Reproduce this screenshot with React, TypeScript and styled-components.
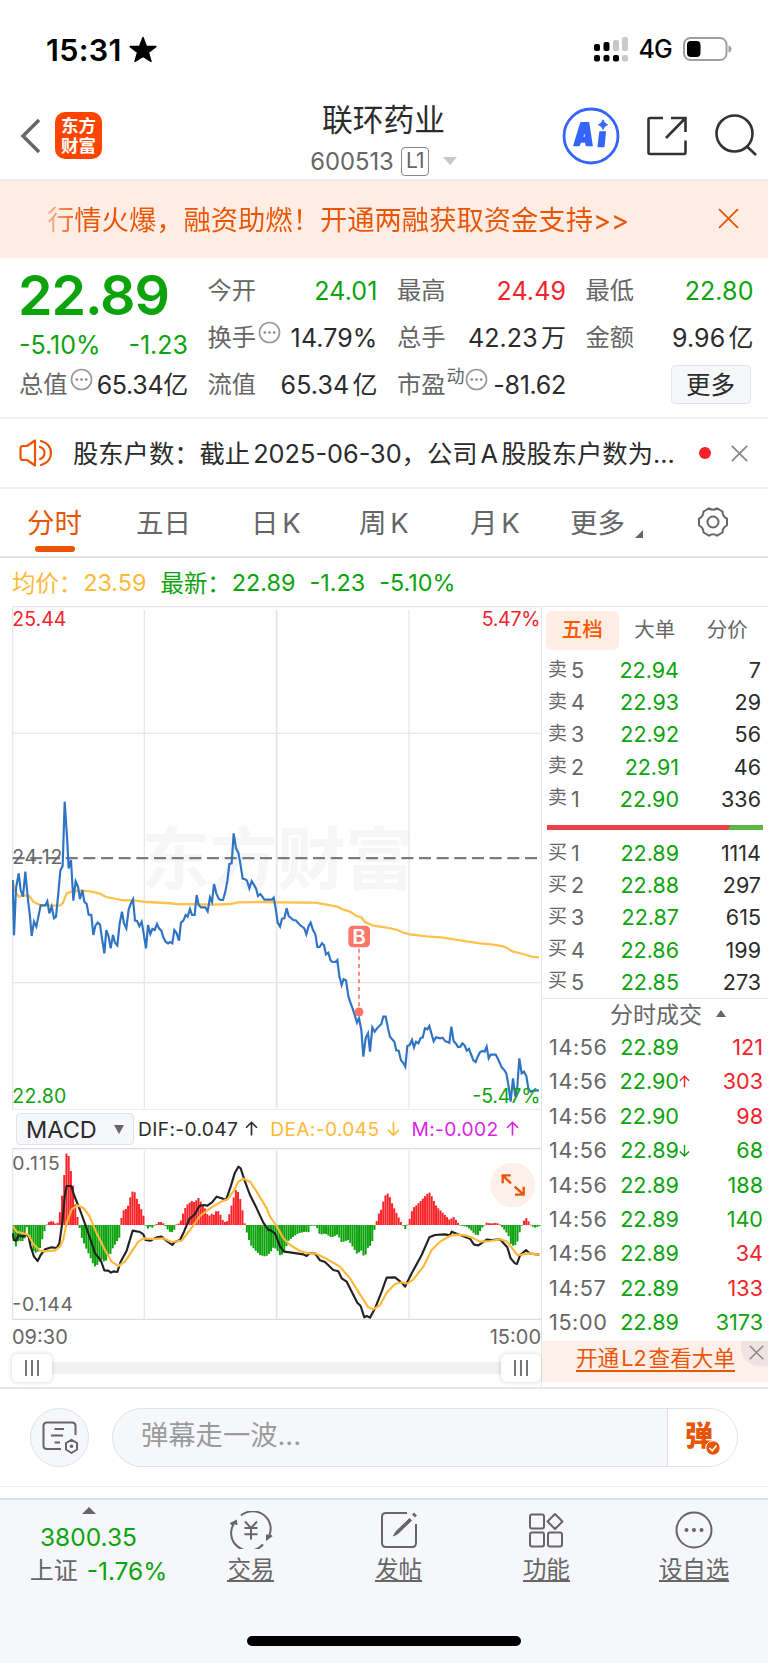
import React from "react";
import styled, { createGlobalStyle } from "styled-components";

const GREEN = "#0ca30c";
const RED = "#f5222a";
const ORANGE = "#ea5504";
const AMBER = "#ffb938";
const INK = "#2b2b2b";
const GREY = "#666";
const LINE = "#e4e6ea";

const Global = createGlobalStyle`
  * { box-sizing: border-box; }
  body {
    margin: 0;
    background: #fff;
    color: ${INK};
    font-family: Inter, "Noto Sans CJK SC", sans-serif;
    font-weight: 400;
  }
  svg { display: block; flex: none; }
`;

const Screen = styled.div`
  width: 768px;
  height: 1663px;
  display: flex;
  flex-direction: column;
  overflow: hidden;
  background: #fff;
  white-space: nowrap;
  word-spacing: -4px;
`;

/* ---------- status bar ---------- */
const StatusBar = styled.div`
  height: 95px;
  padding: 3px 36px 0 46px;
  display: flex;
  align-items: center;
  color: #000;
`;
const Clock = styled.span`
  font-size: 30.5px;
  font-weight: 600;
  letter-spacing: 0.3px;
  margin-right: 7px;
`;
const StatusRight = styled.div`
  margin-left: auto;
  display: flex;
  align-items: center;
`;
const Network = styled.span`
  font-size: 25px;
  font-weight: 500;
  margin: 0 11px 0 11px;
  letter-spacing: -0.8px;
`;

/* ---------- title bar ---------- */
const Header = styled.header`
  height: 86px;
  border-bottom: 2px solid #ececee;
  display: grid;
  grid-template-columns: 1fr auto 1fr;
  padding: 0 11px 0 20px;
`;
const HeaderSide = styled.div<{ $end?: boolean }>`
  display: flex;
  align-items: center;
  padding-bottom: 3px;
  justify-content: ${(p) => (p.$end ? "flex-end" : "flex-start")};
`;
const AppLogo = styled.div`
  width: 47px;
  height: 47px;
  margin-left: 14px;
  border-radius: 10px;
  background: #ff4400;
  color: #fff;
  font-size: 17.5px;
  line-height: 20px;
  font-weight: 700;
  text-align: center;
  white-space: pre;
  padding-top: 4px;
`;
const TitleBlock = styled.div`
  display: flex;
  flex-direction: column;
  align-items: center;
  padding-right: 10px;
`;
const StockName = styled.h1`
  margin: 5px 0 0;
  font-size: 30.8px;
  line-height: 40px;
  font-weight: 400;
`;
const CodeRow = styled.div`
  display: flex;
  align-items: center;
  height: 30px;
  margin-top: 6px;
  font-size: 23.8px;
  color: ${GREY};
`;
const LevelTag = styled.span`
  width: 28px;
  height: 29px;
  margin: 0 14px 0 7px;
  border: 1.5px solid #888;
  border-radius: 4px;
  font-size: 21px;
  line-height: 26px;
  text-align: center;
  letter-spacing: -1px;
`;

/* ---------- promo banner ---------- */
const Banner = styled.div`
  height: 77px;
  background: #feede5;
  display: flex;
  align-items: center;
  justify-content: space-between;
  padding: 0 29px 3px 47px;
  color: ${ORANGE};
  font-size: 27.3px;
`;
const BannerText = styled.span`
  background: linear-gradient(90deg, #f7b893 0, #ea5504 34px);
  background-clip: text;
  -webkit-background-clip: text;
  color: transparent;
`;

/* ---------- quote ---------- */
const Quote = styled.section`
  height: 161px;
  padding: 9px 14px 0 19px;
  border-bottom: 2px solid #f0f0f2;
  display: grid;
  grid-template-columns: 169px 170px 169px 168px;
  column-gap: 19.5px;
`;
const QuoteColumn = styled.div`
  display: flex;
  flex-direction: column;
`;
const BigPrice = styled.div`
  height: 54px;
  line-height: 55px;
  margin-left: -1px;
  font-size: 55.5px;
  font-weight: 600;
  letter-spacing: -1.1px;
  color: ${GREEN};
`;
const Change = styled.div`
  height: 40px;
  padding-top: 8px;
  display: flex;
  align-items: center;
  justify-content: space-between;
  font-size: 25px;
  color: ${GREEN};
`;
const Stat = styled.div<{ $tone?: string }>`
  height: 47px;
  display: flex;
  align-items: center;
  font-size: 25px;
  color: ${(p) => p.$tone || INK};
`;
const StatLabel = styled.span`
  color: ${GREY};
  font-size: 24.3px;
  line-height: 30px;
  margin: -2px 2px 0 0;
`;
const StatValue = styled.span<{ $tight?: boolean }>`
  margin-left: auto;
  line-height: 30px;
  letter-spacing: ${(p) => (p.$tight ? -0.3 : 0.1)}px;
`;
const Sup = styled.sup`
  font-size: 18px;
  line-height: 1;
  color: ${GREY};
  margin: 0 0 15px -1px;
`;
const MoreButton = styled.button`
  margin: 4px 3px 4px auto;
  width: 80px;
  height: 39px;
  border: 1.5px solid #e1e4ea;
  border-radius: 4px;
  background: #f6f7fa;
  font: inherit;
  font-size: 24.5px;
  line-height: 32px;
  color: ${INK};
  padding: 0;
`;

/* ---------- notice ---------- */
const Notice = styled.div`
  height: 70px;
  border-bottom: 2px solid #f0f0f2;
  display: flex;
  align-items: center;
  padding: 0 20px 0 19px;
  font-size: 25.3px;
`;
const NoticeText = styled.span`
  margin: -3px 0 0 20px;
  width: 605px;
`;
const RedDot = styled.i`
  width: 12px;
  height: 12px;
  margin-left: 21px;
  margin-right: 20px;
  border-radius: 50%;
  background: ${RED};
`;

/* ---------- period tabs ---------- */
const PeriodTabs = styled.nav`
  height: 69px;
  border-bottom: 2px solid #dfe2e7;
  padding: 0 0 1px 27px;
  display: grid;
  grid-template-columns: 109px 115px 108px 111px 100px 127px 1fr;
  align-items: center;
  font-size: 27.5px;
  color: ${GREY};
`;
const Period = styled.span<{ $active?: boolean }>`
  position: relative;
  display: flex;
  margin-top: -3px;
  color: ${(p) => (p.$active ? ORANGE : GREY)};
  &::after {
    content: "";
    display: ${(p) => (p.$active ? "block" : "none")};
    position: absolute;
    left: 8px;
    bottom: -11px;
    width: 40px;
    height: 6px;
    border-radius: 3px;
    background: ${ORANGE};
  }
`;
const Corner = styled.i`
  align-self: flex-end;
  margin: 0 0 3px 10px;
  border-left: 8px solid transparent;
  border-bottom: 8px solid ${GREY};
`;

/* ---------- chart summary ---------- */
const Summary = styled.div`
  height: 48px;
  padding: 0 0 0 12px;
  display: flex;
  align-items: center;
  font-size: 23.4px;
  color: ${GREEN};
`;
const SummaryItem = styled.span<{ $gap: number; $tone?: string }>`
  margin-right: ${(p) => p.$gap}px;
  color: ${(p) => p.$tone || GREEN};
`;

/* ---------- main area ---------- */
const Main = styled.div`
  height: 783px;
  display: grid;
  grid-template-columns: 542px 226px;
  border-bottom: 2px solid ${LINE};
`;
const ChartColumn = styled.div`
  padding-left: 12px;
  border-right: 1.5px solid ${LINE};
`;
const MacdBar = styled.div`
  height: 38px;
  display: flex;
  align-items: center;
  padding-left: 4px;
  font-size: 19.2px;
`;
const IndicatorSelect = styled.div`
  width: 118px;
  height: 32px;
  margin-right: 4px;
  border: 1.5px solid #dfe2e8;
  border-radius: 4px;
  background: #f6f7fa;
  display: flex;
  align-items: center;
  padding: 0 9px;
  font-size: 23.5px;
  justify-content: space-between;
`;
const IndicatorValue = styled.span<{ $tone: string; $gap: number }>`
  color: ${(p) => p.$tone};
  margin-right: ${(p) => p.$gap}px;
  display: flex;
  align-items: center;
  gap: 7px;
  letter-spacing: 0.35px;
`;
const TimeAxis = styled.div`
  height: 33px;
  display: flex;
  justify-content: space-between;
  align-items: center;
  font-size: 20px;
  color: ${GREY};
`;
const Slider = styled.div`
  height: 30px;
  display: flex;
  align-items: center;
  background: linear-gradient(#f1f1f3, #f1f1f3) center / 100% 12px no-repeat;
  justify-content: space-between;
`;
const Thumb = styled.div`
  width: 40px;
  height: 28px;
  border-radius: 6px;
  background: #fff;
  box-shadow: 0 0 5px rgba(0, 0, 0, 0.18);
  display: flex;
  align-items: center;
  justify-content: center;
  gap: 4px;
`;
const Grip = styled.i`
  width: 2px;
  height: 16px;
  background: #777;
`;

/* ---------- order book ---------- */
const Side = styled.aside`
  border-top: 1.5px solid ${LINE};
`;
const BookTabs = styled.div`
  display: flex;
  padding: 4px 0 0 4px;
  height: 47px;
`;
const BookTab = styled.span<{ $active?: boolean }>`
  width: 72.5px;
  height: 39px;
  border-radius: 6px;
  text-align: center;
  font-size: 20.5px;
  line-height: 38px;
  color: ${(p) => (p.$active ? "#ff5a00" : GREY)};
  background: ${(p) => (p.$active ? "#feede5" : "transparent")};
  font-weight: ${(p) => (p.$active ? 500 : 400)};
`;
const BookRow = styled.div`
  height: 32.2px;
  display: grid;
  grid-template-columns: 47px 84px 1fr;
  align-items: center;
  padding: 0 7px 0 6px;
  font-size: 21.5px;
`;
const Level = styled.span`
  color: ${GREY};
  display: flex;
  align-items: center;
  gap: 4px;
`;
const LevelSide = styled.span`
  font-size: 19px;
  line-height: 24px;
  margin-top: -1px;
`;
const Price = styled.span`
  color: ${GREEN};
  text-align: right;
`;
const Volume = styled.span<{ $tone?: string }>`
  color: ${(p) => p.$tone || INK};
  text-align: right;
`;
const RatioBar = styled.div`
  height: 5px;
  margin: 10px 5px 7px 5px;
  background: linear-gradient(115deg, #ea4248 0 84%, #5cb545 84%);
`;
const TradesHeader = styled.div`
  border-top: 1.5px solid ${LINE};
  height: 32px;
  display: flex;
  align-items: center;
  padding: 0 0 2px 68px;
  gap: 14px;
  font-size: 23px;
  color: ${GREY};
`;
const Triangle = styled.i<{ $size: number; $height: number; $down?: boolean; $tone?: string }>`
  border: ${(p) => p.$size}px solid transparent;
  border-${(p) => (p.$down ? "top" : "bottom")}: ${(p) => p.$height}px solid ${(p) => p.$tone || GREY};
  border-${(p) => (p.$down ? "bottom" : "top")}: 0;
`;
const TradeRow = styled.div`
  height: 34.4px;
  display: grid;
  grid-template-columns: 58px 72px 14px 1fr;
  align-items: center;
  padding: 0 5px 0 7px;
  font-size: 21.6px;
`;
const Time = styled.span`
  color: ${GREY};
  letter-spacing: 0.6px;
`;
const LevelTwo = styled.div`
  height: 41px;
  margin-top: 2px;
  background: #fdf0ea;
  display: flex;
  justify-content: flex-end;
  color: ${ORANGE};
`;
const LevelTwoLink = styled.span`
  font-size: 21.6px;
  line-height: 27px;
  height: 27px;
  margin: 4px 6px 0 0;
  border-bottom: 2px solid ${ORANGE};
`;
const LevelTwoClose = styled.div`
  width: 27px;
  height: 25px;
  border-bottom-left-radius: 18px;
  background: #eee3de;
  display: flex;
  align-items: center;
  justify-content: center;
  padding: 0 0 3px 4px;
`;

/* ---------- comment ---------- */
const Comment = styled.div`
  height: 98px;
  border-bottom: 1.5px solid #f0f0f2;
  display: flex;
  align-items: center;
  padding: 0 30px;
`;
const RoundButton = styled.div`
  width: 59px;
  height: 59px;
  border: 1.5px solid #dfe1e6;
  border-radius: 50%;
  background: #f6f7fa;
  display: flex;
  align-items: center;
  justify-content: center;
`;
const CommentField = styled.div`
  width: 626px;
  height: 59px;
  margin-left: 23px;
  border: 1.5px solid #dfe1e6;
  border-radius: 30px;
  overflow: hidden;
  background: #f6f7fa;
  display: flex;
`;
const Placeholder = styled.span`
  flex: 1;
  padding-left: 28px;
  font-size: 27.3px;
  line-height: 53px;
  color: #9b9b9b;
`;
const BarrageToggle = styled.div`
  position: relative;
  width: 70px;
  border-left: 1.5px solid #dfe1e6;
  background: #fff;
  color: ${ORANGE};
  font-size: 28px;
  font-weight: 900;
  line-height: 54px;
  padding-left: 17px;
`;
const CheckBadge = styled.div`
  position: absolute;
  left: 37px;
  top: 31px;
`;

/* ---------- bottom nav ---------- */
const BottomNav = styled.nav`
  margin-top: 11px;
  flex: 1;
  border-top: 2px solid #dfe2e7;
  background: #f6f7fa;
  display: grid;
  grid-template-columns: 177px repeat(4, 1fr);
  grid-template-rows: 96px 1fr;
  justify-items: center;
`;
const IndexBlock = styled.div`
  display: flex;
  flex-direction: column;
  align-items: center;
  padding-top: 7px;
  font-size: 24.5px;
  color: ${GREEN};
`;
const IndexPrice = styled.div`
  margin-top: 6px;
  line-height: 34px;
`;
const IndexLine = styled.div`
  display: flex;
  line-height: 34px;
  padding-left: 20px;
`;
const IndexName = styled.span`
  color: ${GREY};
  margin-right: 9px;
  font-size: 24px;
`;
const NavItem = styled.div`
  display: flex;
  flex-direction: column;
  align-items: center;
  padding-top: 11px;
`;
const NavLabel = styled.span`
  margin-top: 5px;
  height: 28px;
  line-height: 31px;
  font-size: 23.5px;
  color: ${GREY};
  border-bottom: 2px solid ${GREY};
`;
const HomeIndicator = styled.div`
  grid-column: 1 / -1;
  width: 274px;
  height: 10px;
  border-radius: 5px;
  background: #000;
  align-self: end;
  margin-bottom: 17px;
`;

/* ---------- icons ---------- */
const Cross = ({ size, color, width = 1.8 }: { size: number; color: string; width?: number }) => (
  <svg width={size} height={size} viewBox="0 0 20 20" fill="none" stroke={color} strokeWidth={(width * 20) / size}>
    <path d="M1 1L19 19M19 1L1 19" />
  </svg>
);

const DotsIcon = styled.svg`
  width: 23px;
  height: 23px;
  margin: 0 0 11px 0;
`;
const MoreDots = () => (
  <DotsIcon viewBox="0 0 22 22">
    <circle cx="11" cy="11" r="9.6" fill="none" stroke="#999" strokeWidth="1.6" />
    <g fill="#888">
      <circle cx="6.5" cy="11" r="1.3" />
      <circle cx="11" cy="11" r="1.3" />
      <circle cx="15.5" cy="11" r="1.3" />
    </g>
  </DotsIcon>
);
const HeaderIcon = styled.svg<{ $gap: number }>`
  margin-left: ${(p) => p.$gap}px;
`;

const Arrow = ({ down, size = 13, color }: { down?: boolean; size?: number; color: string }) => (
  <svg width={size} height={size * 1.2} viewBox="0 0 12 14.4" fill="none" stroke={color} strokeWidth="1.5">
    <path d={down ? "M6 1V13.4M1 8.2L6 13.2L11 8.2" : "M6 13.4V1M1 6.2L6 1.2L11 6.2"} />
  </svg>
);

/* ---------- chart data, in thirds of a pixel ---------- */
type Point = [number, number];
const parse = (s: string): Point[] => s.trim().split(/\s+/).map((p) => p.split(",").map(Number) as Point);
const shift = (pts: Point[], dx: number, dy: number): Point[] => pts.map(([x, y]) => [x + dx, y + dy]);
const join = (pts: Point[]) => pts.map((p) => p.join(",")).join(" ");

const price = [
  ...parse(`38,300 42,466 48,325 56,280 62,330 69,350 76,275 84,360 90,410 95,468 102,425 109,440 122,376 136,376
    142,364 148,400 155,380 162,415 168,410 175,340 181,272 188,258 194,65 201,170 206,265 213,240 220,362 227,304
    234,320 240,357 247,330 253,365 260,372 266,404 274,405 280,465 286,438 293,428 300,434 306,475 313,520 319,450
    326,470 332,505 339,465 345,488 352,496 359,430 366,395 372,430 379,445 386,388 392,372 399,358 405,422 411,423
    418,438 425,425 431,460 438,505 444,435 451,462 457,447 464,450 471,432 477,445 484,452 490,472 497,485 504,490
    510,486 517,490 523,450 530,460 537,482 543,428 550,422 557,405 563,410 570,387 576,405 584,405 590,345 596,375
    603,382 616,382 623,394 630,352 636,366 642,312 649,340 656,356 662,360 669,360 676,335 682,303 688,252 695,250
    701,160 708,205 715,218 721,250 728,296 735,298 741,302 748,325 755,303 761,313 768,325 774,348 781,342`),
  ...shift(
    parse(`7,290 13,299 36,299 41,293 47,325 53,368 60,380 66,356 73,355 80,325 86,348 100,360 107,361 120,375
    133,385 139,403 146,378 152,368 159,390 166,402 172,441 179,441 186,430 192,436 198,463 205,458 212,482 218,486
    226,486 232,480 238,528 245,555 251,537 258,541 265,588 271,607 278,626 284,645 291,668 297,655 304,690 310,770
    317,714 324,700 330,755 337,682 344,695 351,685 364,672 370,650 377,650 384,685 390,710 403,725 409,751 416,752
    423,781 430,789 436,800 442,738 449,735 456,720 462,742 468,725 475,730 482,714 488,713 495,685 502,688 508,678
    515,703 521,724 528,712 541,715 548,713 555,723 568,729 574,680 581,724 588,731 594,741 601,740 607,730 614,736
    620,752 627,747 634,765 640,781 647,786 653,770 660,757 667,753 674,755 680,740 686,775 692,764 707,764 713,775
    725,802 732,809 739,820 746,860 752,905 759,835 766,890 772,860 778,775 785,820 792,815 799,828 805,865 812,875
    820,872 837,871`),
    780,
    60
  ),
];
const average = [
  ...parse(`38,300 46,335 56,350 70,346 88,348 100,365 122,376 160,377 180,376 188,370 200,340 215,334 245,332
    270,334 300,341 318,351 350,357 370,361 400,361 440,366 500,369 530,372 640,374 690,372 715,367 770,366`),
  ...shift(
    parse(`0,306 50,307 165,308 200,314 232,320 250,329 268,334 290,348 304,352 315,366 340,377 380,383 413,390
    430,398 450,403 500,409 550,413 600,421 660,430 700,434 730,439 745,446 757,454 790,462 818,471 837,472`),
    780,
    60
  ),
];
const dif = [
  ...parse(`38,460 42,480 48,482 56,466 70,470 78,463 86,470 92,500 102,530 113,543 122,525 135,508 155,502 170,504
    178,490 188,420 194,350 200,318 214,318 222,345 240,390 258,440 272,480 285,520 302,540 313,571 325,572 333,578
    340,574 352,576 362,545 380,512 398,452 420,456 430,463 437,480 452,482 470,472 485,470 500,483 517,495 523,487
    540,480 552,455 568,417 585,402 598,378 610,375 622,377 636,367 650,350 665,355 678,360 692,320 704,280 715,260
    722,265 735,305 750,345 770,385 790,428 805,450`),
  ...shift(
    parse(`0,390 15,400 30,440 42,455 60,457 100,463 110,468 120,459 135,460 150,481 165,486 190,510 205,514 215,535
    230,545 262,608 272,618 283,652 290,648 300,653 315,625 335,575 350,533 375,532 395,548 405,560 425,520 455,465
    478,412 495,405 525,403 540,406 545,395 570,405 600,416 612,434 625,436 650,419 665,420 690,418 712,442 722,475
    735,490 741,492 750,466 768,450 780,461 808,464`),
    810,
    60
  ),
];
const dea = [
  ...parse(`38,438 50,455 70,460 85,465 100,492 120,512 135,514 165,511 180,500 190,478 200,430 215,388 232,376
    250,384 268,408 290,460 315,510 335,545 355,558 375,545 395,515 415,485 430,475 460,477 490,475 515,486 545,482
    570,450 600,408 630,385 660,367 682,358 700,335 715,305 730,296 750,305 770,335 800,385`),
  ...shift(
    parse(`0,350 20,378 40,415 60,435 90,453 115,460 135,460 165,474 210,500 240,535 270,583 295,622 310,628 330,615
    350,578 375,552 395,547 412,551 430,538 460,500 485,450 510,425 540,408 560,404 590,407 610,415 630,425 660,423
    690,418 710,424 725,443 742,465 755,464 775,460 808,464`),
    810,
    60
  ),
];
const histogram = [
  ...parse(`38,-20 44,-74 50,-58 56,-45 62,-48 68,-48 74,-40 78,0 82,-10 95,-60 101,-80 110,-85 120,-70 130,-30
    138,-3 143,8 152,10 157,15 163,5 172,3 178,25 184,75 190,110 197,210 204,223 210,175 217,140 223,80 230,35 237,3
    243,-32 256,-65 270,-95 283,-125 290,-122 300,-108 308,-100 315,-118 323,-90 330,-90 338,-70 350,-50 358,-38
    362,0 366,35 373,48 382,48 388,75 395,95 401,108 408,85 415,68 427,40 434,15 438,-5 442,-12 450,-5 457,-8 463,-2
    470,3 477,9 487,9 492,2 500,-8 507,-20 520,-22 525,-8 530,3 540,5 546,25 553,45 560,60 570,68 576,72 584,68
    595,82 601,72 608,60 615,50 622,32 628,28 636,34 643,30 650,45 657,40 664,25 670,10 680,8 686,25 692,50 700,78
    706,105 712,104 718,90 725,60 731,20 737,-10 745,-38 752,-60 765,-75 780,-90 797,-95`),
  ...shift(
    parse(`0,-84 10,-68 20,-72 32,-95 45,-75 55,-48 70,-35 85,-25 105,-20 118,-22 122,-3 136,-1 142,-10 150,-30
    165,-25 185,-38 203,-28 215,-52 235,-45 250,-68 262,-88 273,-75 284,-100 292,-70 305,-58 312,-20 318,3 324,30
    333,45 341,75 350,98 358,88 368,60 380,35 392,10 398,0 406,-12 412,0 418,15 428,50 440,60 455,75 470,92 480,98
    490,75 500,55 515,40 530,25 542,12 547,28 556,18 565,5 572,-2 590,-5 600,-12 612,-25 622,-33 632,-15 640,-3
    648,3 652,11 658,4 680,7 690,1 700,-10 715,-30 725,-65 732,-60 740,-60 748,-25 755,-3 763,15 770,22 777,8 785,-3
    795,-8 812,-2`),
    810,
    0
  ),
];
const sample = (x: number) => {
  const i = Math.max(1, histogram.findIndex((p) => p[0] >= x));
  const [x0, v0] = histogram[i - 1];
  const [x1, v1] = histogram[i];
  return v0 + ((v1 - v0) * (x - x0)) / (x1 - x0);
};
const bars = Array.from({ length: 240 }, (_, i) => 41 + i * 6.6).map((x) => ({ x, v: sample(x) }));

const PriceChart = () => (
  <svg width="529" height="504" viewBox="36 -522 1587 1512" fontFamily="Inter, sans-serif">
    <text x="424" y="312" fontSize="206" fontWeight="700" fill="#f6f6f6" fontFamily="Noto Sans CJK SC, sans-serif" textLength="818">
      东方财富
    </text>
    <g stroke="#e4e7ef" strokeWidth="4" fill="none">
      <path d="M36 -520H1623M38 -520V990M433 -510V983M1227 -510V983M38 -140H1623M38 608H1623" />
      <path d="M830 -510V983" strokeWidth="6" />
      <path d="M36 988H1623" stroke="#eceef2" />
    </g>
    <path d="M38 234.5H1620" stroke="#7b7b7b" strokeWidth="7" strokeDasharray="36 17" />
    <polyline points={join(average)} fill="none" stroke="#ffc14a" strokeWidth="6.8" />
    <polyline points={join(price)} fill="none" stroke="#2f74c4" strokeWidth="6.5" strokeLinejoin="miter" />
    <g fontSize="58.5">
      <text x="37" y="-463" fill={RED} textLength="162">25.44</text>
      <text x="1621" y="-463" fill={RED} textAnchor="end" textLength="176">5.47%</text>
      <text x="37" y="251" fill={GREY} textLength="150">24.12</text>
      <text x="37" y="969" fill={GREEN} textLength="162">22.80</text>
      <text x="1621" y="969" fill={GREEN} textAnchor="end" textLength="204">-5.47%</text>
    </g>
    <path d="M1077 506V690" stroke="#ff7668" strokeWidth="5" strokeDasharray="12 11" />
    <circle cx="1077" cy="696" r="13.5" fill="#ff7668" />
    <rect x="1045" y="437" width="65" height="65" rx="13" fill="#ff7668" />
    <text x="1077" y="492" fontSize="62" fontWeight="600" fill="#fff" textAnchor="middle">B</text>
  </svg>
);

const MacdChart = () => (
  <svg width="529" height="172" viewBox="36 204 1587 516" fontFamily="Inter, sans-serif">
    <g stroke="#e4e7ef" strokeWidth="4" fill="none">
      <path d="M38 204V718M433 212V716M1227 212V716" />
      <path d="M830 212V716" strokeWidth="6" />
      <path d="M36 206H1623M36 718H1623" stroke="#d9dce4" />
    </g>
    {bars.map(({ x, v }) => (
      <rect key={x} x={x - 3} y={v > 0 ? 435 - v : 435} width="6" height={Math.max(2, Math.abs(v))} fill={v > 0 ? "#fa2226" : "#0ba10b"} />
    ))}
    <polyline points={join(dif)} fill="none" stroke="#222" strokeWidth="6.4" strokeLinejoin="round" />
    <polyline points={join(dea)} fill="none" stroke="#ffb938" strokeWidth="6.4" strokeLinejoin="round" />
    <g fontSize="58" fill={GREY}>
      <text x="37" y="269" textLength="142">0.115</text>
      <text x="37" y="694" textLength="182">-0.144</text>
    </g>
    <circle cx="1538" cy="315" r="67" fill="#fdf0ea" />
    <path d="M1508 310V286H1532M1508 286L1533 310M1571 320V344H1545M1571 344L1544 320" fill="none" stroke={ORANGE} strokeWidth="7" />
  </svg>
);

const asks = [
  ["卖", "5", "22.94", "7"],
  ["卖", "4", "22.93", "29"],
  ["卖", "3", "22.92", "56"],
  ["卖", "2", "22.91", "46"],
  ["卖", "1", "22.90", "336"],
];
const bids = [
  ["买", "1", "22.89", "1114"],
  ["买", "2", "22.88", "297"],
  ["买", "3", "22.87", "615"],
  ["买", "4", "22.86", "199"],
  ["买", "5", "22.85", "273"],
];
const trades: { t: string; p: string; v: string; buy?: boolean; dir?: "up" | "down" }[] = [
  { t: "14:56", p: "22.89", v: "121", buy: true },
  { t: "14:56", p: "22.90", v: "303", buy: true, dir: "up" },
  { t: "14:56", p: "22.90", v: "98", buy: true },
  { t: "14:56", p: "22.89", v: "68", dir: "down" },
  { t: "14:56", p: "22.89", v: "188" },
  { t: "14:56", p: "22.89", v: "140" },
  { t: "14:56", p: "22.89", v: "34", buy: true },
  { t: "14:57", p: "22.89", v: "133", buy: true },
  { t: "15:00", p: "22.89", v: "3173" },
];

const Book = ({ rows }: { rows: string[][] }) => (
  <>
    {rows.map(([side, level, p, v]) => (
      <BookRow key={level}>
        <Level>
          <LevelSide>{side}</LevelSide>
          {level}
        </Level>
        <Price>{p}</Price>
        <Volume>{v}</Volume>
      </BookRow>
    ))}
  </>
);

const iconStroke = { fill: "none", stroke: GREY, strokeWidth: 2 };

export default function App() {
  return (
    <Screen>
      <Global />
      <StatusBar>
        <Clock>15:31</Clock>
        <svg width="28" height="27" viewBox="0 0 28 27" stroke="#000" strokeWidth="1.5" strokeLinejoin="round">
          <path d="M14 1.5L17.3 10.2L26.8 10.6L19.4 16.4L22 25.4L14 20.3L6 25.4L8.6 16.4L1.2 10.6L10.7 10.2Z" />
        </svg>
        <StatusRight>
          <svg width="34" height="25" viewBox="0 0 34 25">
            <g fill="#c9c9c9">
              <rect x="19" y="3" width="6" height="11" rx="2" />
              <rect x="28" y="0" width="6" height="14" rx="2" />
              <rect x="28" y="18" width="6" height="6.5" rx="2" />
            </g>
            <rect x="0" y="7" width="6" height="7" rx="2" />
            <rect x="9.5" y="5" width="6" height="9" rx="2" />
            <rect x="0" y="18" width="6" height="6.5" rx="2" />
            <rect x="9.5" y="18" width="6" height="6.5" rx="2" />
            <rect x="19" y="18" width="6" height="6.5" rx="2" />
          </svg>
          <Network>4G</Network>
          <svg width="49" height="24" viewBox="0 0 49 24">
            <rect x="1" y="1" width="42.5" height="22" rx="6.5" fill="none" stroke="#a0a0a0" strokeWidth="2" />
            <rect x="4" y="4" width="13.5" height="16" rx="4" />
            <path d="M45.5 8.5Q48.5 9.5 48.5 12T45.5 15.5Z" fill="#a0a0a0" />
          </svg>
        </StatusRight>
      </StatusBar>

      <Header>
        <HeaderSide>
          <svg width="21" height="36" viewBox="0 0 21 36" fill="none" stroke="#666" strokeWidth="3.4">
            <path d="M19 2L3 18L19 34" />
          </svg>
          <AppLogo>{"东方\n财富"}</AppLogo>
        </HeaderSide>
        <TitleBlock>
          <StockName>联环药业</StockName>
          <CodeRow>
            600513
            <LevelTag>L1</LevelTag>
            <Triangle $size={7} $height={8} $down $tone="#c8c8c8" />
          </CodeRow>
        </TitleBlock>
        <HeaderSide $end>
          <svg width="58" height="58" viewBox="0 0 58 58">
            <circle cx="29" cy="29" r="27" fill="none" stroke="#3565fb" strokeWidth="2.8" />
            <g fill="#3565fb" stroke="#3565fb" strokeWidth="1.6" strokeLinejoin="round">
              <path fillRule="evenodd" d="M19 15.800H26.500L30 38.500H24.500L23.800 35H18.500L17 38.500H12ZM23 22.500L20.300 30.500H23.800Z" />
              <path d="M38 25H43.200L41.800 39.500H36.300Z" />
            </g>
            <path d="M41 12.800Q42 16.800 45.500 17.800Q42 18.800 41 22.300Q40 18.800 36.500 17.800Q40 16.800 41 12.800Z" fill="#3565fb" stroke="#3565fb" strokeLinejoin="round" />
          </svg>
          <HeaderIcon $gap={26} width="42" height="42" viewBox="0 0 42 42" fill="none" stroke="#333" strokeWidth="2.6">
            <path d="M17 3H4Q2.500 3 2.500 4.500V37.500Q2.500 39 4 39H38Q39.500 39 39.500 37.500V25.500" />
            <path d="M25 3H39.500V17M39 3.500L20 23" />
          </HeaderIcon>
          <HeaderIcon $gap={26} width="43" height="43" viewBox="0 0 43 43" fill="none" stroke="#333" strokeWidth="2.6">
            <circle cx="20.500" cy="19.500" r="18" />
            <path d="M33 32.500L42 41" />
          </HeaderIcon>
        </HeaderSide>
      </Header>

      <Banner>
        <BannerText>行情火爆，融资助燃！开通两融获取资金支持&gt;&gt;</BannerText>
        <Cross size={21} color={ORANGE} />
      </Banner>

      <Quote>
        <QuoteColumn>
          <BigPrice>22.89</BigPrice>
          <Change>
            <span>-5.10%</span>
            <span>-1.23</span>
          </Change>
          <Stat>
            <StatLabel>总值</StatLabel>
            <MoreDots />
            <StatValue $tight>65.34亿</StatValue>
          </Stat>
        </QuoteColumn>
        <QuoteColumn>
          <Stat $tone={GREEN}>
            <StatLabel>今开</StatLabel>
            <StatValue>24.01</StatValue>
          </Stat>
          <Stat>
            <StatLabel>换手</StatLabel>
            <MoreDots />
            <StatValue>14.79%</StatValue>
          </Stat>
          <Stat>
            <StatLabel>流值</StatLabel>
            <StatValue>65.34 亿</StatValue>
          </Stat>
        </QuoteColumn>
        <QuoteColumn>
          <Stat $tone={RED}>
            <StatLabel>最高</StatLabel>
            <StatValue>24.49</StatValue>
          </Stat>
          <Stat>
            <StatLabel>总手</StatLabel>
            <StatValue>42.23 万</StatValue>
          </Stat>
          <Stat>
            <StatLabel>市盈</StatLabel>
            <Sup>动</Sup>
            <MoreDots />
            <StatValue $tight>-81.62</StatValue>
          </Stat>
        </QuoteColumn>
        <QuoteColumn>
          <Stat $tone={GREEN}>
            <StatLabel>最低</StatLabel>
            <StatValue>22.80</StatValue>
          </Stat>
          <Stat>
            <StatLabel>金额</StatLabel>
            <StatValue>9.96 亿</StatValue>
          </Stat>
          <MoreButton>更多</MoreButton>
        </QuoteColumn>
      </Quote>

      <Notice>
        <svg width="34" height="28" viewBox="0 0 34 28" fill="none" stroke={ORANGE} strokeWidth="2.200" strokeLinejoin="round" strokeLinecap="round">
          <path d="M16 1.500V26.500L8 21H4Q1.500 21 1.500 18.500V9.500Q1.500 7 4 7H8Z" />
          <path d="M21 8Q25.500 9.500 25.500 14T21 20M22 2Q32 5 32 14T22 26" />
        </svg>
        <NoticeText>股东户数：截止 2025-06-30，公司 A 股股东户数为...</NoticeText>
        <RedDot />
        <Cross size={17} color="#8a8a8a" />
      </Notice>

      <PeriodTabs>
        <Period $active>分时</Period>
        <Period>五日</Period>
        <Period>日 K</Period>
        <Period>周 K</Period>
        <Period>月 K</Period>
        <Period>
          更多
          <Corner />
        </Period>
        <svg width="32" height="32" viewBox="0 0 32 32" {...iconStroke}>
          <path d="M12 2.300Q16 5 20 2.300L25.500 5.500Q25.500 10.500 30 12.700V19.300Q25.500 21.500 25.500 26.500L20 29.700Q16 27 12 29.700L6.500 26.500Q6.500 21.500 2 19.300V12.700Q6.500 10.500 6.500 5.500Z" strokeLinejoin="round" />
          <circle cx="16" cy="16" r="5.500" />
        </svg>
      </PeriodTabs>

      <Summary>
        <SummaryItem $gap={1} $tone={AMBER}>均价：</SummaryItem>
        <SummaryItem $gap={14} $tone={AMBER}>23.59</SummaryItem>
        <SummaryItem $gap={1}>最新：</SummaryItem>
        <SummaryItem $gap={14}>22.89</SummaryItem>
        <SummaryItem $gap={14}>-1.23</SummaryItem>
        <SummaryItem $gap={0}>-5.10%</SummaryItem>
      </Summary>

      <Main>
        <ChartColumn>
          <PriceChart />
          <MacdBar>
            <IndicatorSelect>
              MACD
              <Triangle $size={5} $height={9} $down />
            </IndicatorSelect>
            <IndicatorValue $tone={INK} $gap={12}>
              DIF:-0.047 <Arrow color={INK} />
            </IndicatorValue>
            <IndicatorValue $tone={AMBER} $gap={12}>
              DEA:-0.045 <Arrow down color={AMBER} />
            </IndicatorValue>
            <IndicatorValue $tone="#dd1fe6" $gap={0}>
              M:-0.002 <Arrow color="#dd1fe6" />
            </IndicatorValue>
          </MacdBar>
          <MacdChart />
          <TimeAxis>
            <span>09:30</span>
            <span>15:00</span>
          </TimeAxis>
          <Slider>
            <Thumb><Grip /><Grip /><Grip /></Thumb>
            <Thumb><Grip /><Grip /><Grip /></Thumb>
          </Slider>
        </ChartColumn>

        <Side>
          <BookTabs>
            <BookTab $active>五档</BookTab>
            <BookTab>大单</BookTab>
            <BookTab>分价</BookTab>
          </BookTabs>
          <Book rows={asks} />
          <RatioBar />
          <Book rows={bids} />
          <TradesHeader>
            分时成交
            <Triangle $size={5} $height={7} />
          </TradesHeader>
          {trades.map((r, i) => (
            <TradeRow key={i}>
              <Time>{r.t}</Time>
              <Price>{r.p}</Price>
              <span>{r.dir && <Arrow size={11} down={r.dir === "down"} color={r.dir === "up" ? RED : GREEN} />}</span>
              <Volume $tone={r.buy ? RED : GREEN}>{r.v}</Volume>
            </TradeRow>
          ))}
          <LevelTwo>
            <LevelTwoLink>开通 L2 查看大单</LevelTwoLink>
            <LevelTwoClose>
              <Cross size={15} color="#8a8a8a" width={1.5} />
            </LevelTwoClose>
          </LevelTwo>
        </Side>
      </Main>

      <Comment>
        <RoundButton>
          <svg width="36" height="34" viewBox="0 0 36 34" {...iconStroke}>
            <path d="M19 28H5Q1.500 28 1.500 24.500V5Q1.500 1.500 5 1.500H30Q33.500 1.500 33.500 5V14" />
            <path d="M12.500 8H22M9 14.500H21M12.500 21.500H18" />
            <path d="M29.500 18.800L35 22V28.500L29.500 32L24 28.500V22Z" strokeLinejoin="round" />
            <circle cx="29.500" cy="25.300" r="1.800" fill={GREY} stroke="none" />
          </svg>
        </RoundButton>
        <CommentField>
          <Placeholder>弹幕走一波...</Placeholder>
          <BarrageToggle>
            弹
            <CheckBadge>
              <svg width="16" height="16" viewBox="0 0 16 16">
                <circle cx="8" cy="8" r="7.200" fill={ORANGE} stroke="#fff" strokeWidth="1" />
                <path d="M4.500 8L7.200 10.700L11.500 5.500" fill="none" stroke="#fff" strokeWidth="1.600" />
              </svg>
            </CheckBadge>
          </BarrageToggle>
        </CommentField>
      </Comment>

      <BottomNav>
        <IndexBlock>
          <Triangle $size={7} $height={7} />
          <IndexPrice>3800.35</IndexPrice>
          <IndexLine>
            <IndexName>上证</IndexName>-1.76%
          </IndexLine>
        </IndexBlock>
        <NavItem>
          <svg width="44" height="38" viewBox="0 0 44 38" {...iconStroke}>
            <path d="M12 4.500A18 17.500 0 0 1 39 27M34 33.500A18 17.500 0 0 1 6.500 10.500M1.500 13L7 10L7.500 14M38 23.500V28L43 24.500" />
            <path d="M16 10.500L22 17L28 10.500M22 17V28.500M15.500 17H28.500M15.500 23.300H28.500" />
          </svg>
          <NavLabel>交易</NavLabel>
        </NavItem>
        <NavItem>
          <svg width="38" height="38" viewBox="0 0 38 38" {...iconStroke}>
            <path d="M27 2H6Q2 2 2 6V32Q2 36 6 36H32Q36 36 36 32V13" />
            <path d="M29.500 7.500L16 20.500L13.500 25L18 22.500L31.500 9.500Z" fill={GREY} strokeWidth="1" />
            <path d="M33.500 5L35.500 3" strokeWidth="4" />
          </svg>
          <NavLabel>发帖</NavLabel>
        </NavItem>
        <NavItem>
          <svg width="38" height="38" viewBox="0 0 38 38" {...iconStroke}>
            <rect x="3" y="3.500" width="14" height="14" rx="2" />
            <rect x="3" y="21.500" width="14" height="14" rx="2" />
            <rect x="21" y="21.500" width="14" height="14" rx="2" />
            <path d="M28 3L35.500 10.500L28 18L20.500 10.500Z" strokeLinejoin="round" />
          </svg>
          <NavLabel>功能</NavLabel>
        </NavItem>
        <NavItem>
          <svg width="38" height="38" viewBox="0 0 38 38" {...iconStroke}>
            <circle cx="19" cy="19" r="17.500" />
            <g fill={GREY} stroke="none">
              <circle cx="11.500" cy="19" r="2" />
              <circle cx="19" cy="19" r="2" />
              <circle cx="26.500" cy="19" r="2" />
            </g>
          </svg>
          <NavLabel>设自选</NavLabel>
        </NavItem>
        <HomeIndicator />
      </BottomNav>
    </Screen>
  );
}
